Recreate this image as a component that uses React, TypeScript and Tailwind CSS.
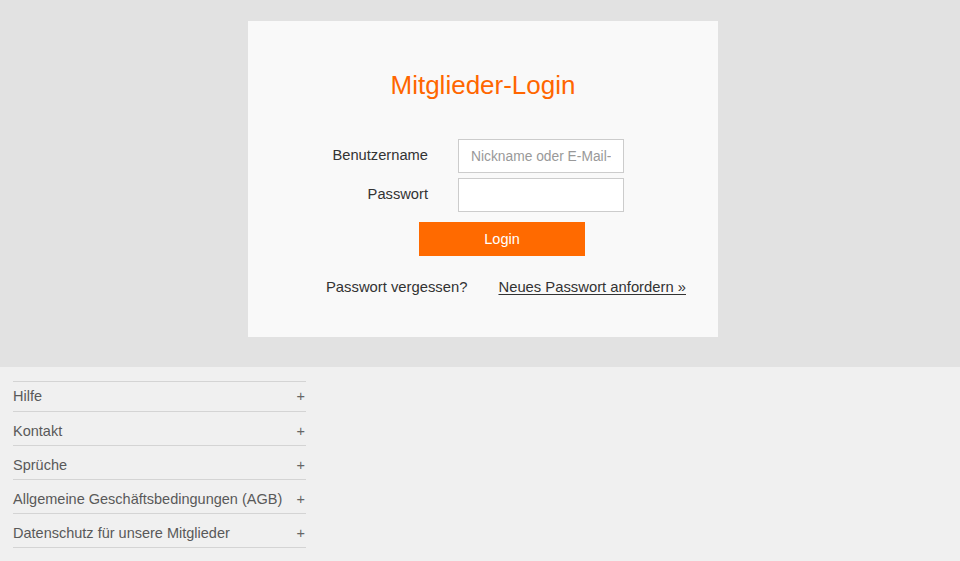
const FONT = { fontFamily: '"Liberation Sans", Arial, sans-serif' }

const FOOTER_ITEMS = [
  "Hilfe",
  "Kontakt",
  "Sprüche",
  "Allgemeine Geschäftsbedingungen (AGB)",
  "Datenschutz für unsere Mitglieder",
]

function LoginCard() {
  return (
    <div className="ml-[248px] w-[470px] h-[316px] bg-[#f9f9f9] pt-[49px]">
      <h1 className="text-center text-[26px] leading-[30px] text-[#ff6600]">Mitglieder-Login</h1>

      <form className="mt-[39px]" onSubmit={(e) => e.preventDefault()}>
        <div className="grid grid-cols-[180px_166px] gap-x-[30px] gap-y-[5px] items-center">
          <label htmlFor="user" className="text-right text-[14.7px] leading-[20px] text-[#333] -mt-[2px]">
            Benutzername
          </label>
          <input
            id="user"
            type="text"
            placeholder="Nickname oder E-Mail-Adresse"
            className="h-[34px] w-[166px] border border-[#cccccc] bg-white px-[12px] text-[13.8px] text-[#333] outline-none placeholder:text-[#999]"
          />
          <label htmlFor="pass" className="text-right text-[14.7px] leading-[20px] text-[#333] -mt-[3px]">
            Passwort
          </label>
          <input
            id="pass"
            type="password"
            className="h-[34px] w-[166px] border border-[#cccccc] bg-white px-[12px] text-[14px] outline-none"
          />
        </div>

        <button
          type="submit"
          className="mt-[10px] ml-[171px] block h-[34px] w-[166px] bg-[#ff6a00] pt-[2px] text-[14.5px] text-white"
        >
          Login
        </button>

        <div className="mt-[21px] flex items-center gap-[31px] pl-[78px] text-[14.8px] leading-[20px] text-[#333]">
          <span>Passwort vergessen?</span>
          <a href="#" className="underline underline-offset-[2px]">
            Neues Passwort anfordern »
          </a>
        </div>
      </form>
    </div>
  )
}

export default function App() {
  return (
    <div className="flex h-[561px] flex-col" style={FONT}>
      <div className="h-[367px] bg-[#e2e2e2] pt-[21px]">
        <LoginCard />
      </div>

      <div className="flex-1 bg-[#f0f0f0] pt-[14px]">
        <ul className="ml-[13px] w-[293px] border-t border-[#d4d4d4]">
          {FOOTER_ITEMS.map((item, i) => (
            <li
              key={item}
              className={
                "flex items-center justify-between border-b border-[#d4d4d4] text-[14.5px] leading-[20px] text-[#595959] " +
                (i === 0 ? "h-[30px] pb-[1px]" : "h-[34px] pt-[4px]")
              }
            >
              <span>{item}</span>
              <span className="pr-[1px] text-[#666]">+</span>
            </li>
          ))}
        </ul>
      </div>
    </div>
  )
}
